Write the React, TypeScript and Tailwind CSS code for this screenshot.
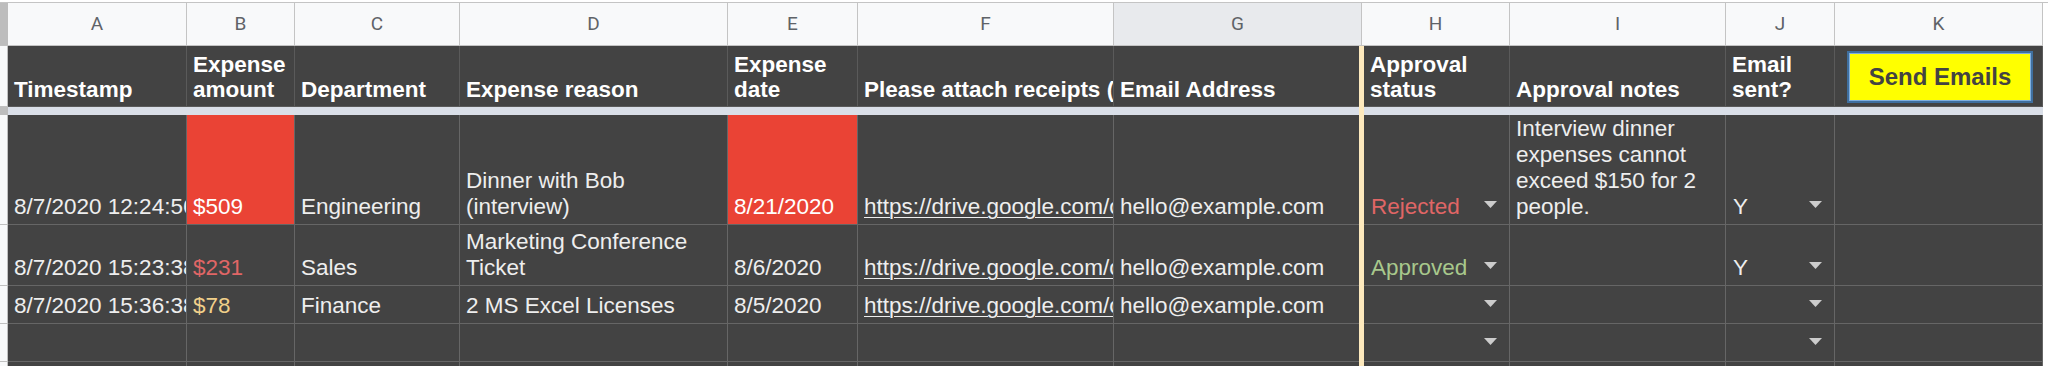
import React from "react";

const SANS = "font-['Liberation_Sans',Arial,sans-serif]";
const LETTER_COLS =
  "grid grid-cols-[8px_179px_108px_165px_268px_130px_256px_248px_148px_216px_109px_208px_5px]";
const COLS =
  "grid grid-cols-[8px_179px_108px_165px_268px_130px_256px_245px_5px_146px_216px_109px_208px_5px]";

function Arrow() {
  return (
    <svg width="13" height="7" viewBox="0 0 13 7" className="shrink-0 mb-[12px]">
      <polygon points="0,0 13,0 6.5,7" fill="#cccccc" />
    </svg>
  );
}

const dataCell =
  "flex items-end pl-[6px] pb-[4px] text-[22.5px] leading-[26px] text-[#eeeeee] whitespace-nowrap overflow-hidden border-b border-[#666666]";
const hdrCell =
  "flex items-end pl-[6px] pb-[4px] text-[22.5px] leading-[25px] font-bold text-white whitespace-nowrap overflow-hidden bg-[#434343] border-b border-[#5a5a5a]";

function RowHead() {
  return <div className="bg-[#f8f9fa] border-r border-b border-[#c0c0c0]" />;
}

function Cream() {
  return <div className="bg-[#fde9bd]" />;
}

type RowProps = {
  h: string;
  a?: React.ReactNode;
  b?: React.ReactNode;
  bRed?: boolean;
  c?: React.ReactNode;
  d?: React.ReactNode;
  e?: React.ReactNode;
  eRed?: boolean;
  f?: React.ReactNode;
  g?: React.ReactNode;
  hStatus?: React.ReactNode;
  i?: React.ReactNode;
  j?: React.ReactNode;
};

function DataRow(p: RowProps) {
  return (
    <div className={`${COLS} ${p.h}`}>
      <RowHead />
      <div className={`${dataCell} bg-[#434343] border-r`}>{p.a}</div>
      <div className={`${dataCell} border-r ${p.bRed ? "bg-[#ea4335] text-white" : "bg-[#434343]"}`}>{p.b}</div>
      <div className={`${dataCell} bg-[#434343] border-r`}>{p.c}</div>
      <div className={`${dataCell} bg-[#434343] border-r`}>{p.d}</div>
      <div className={`${dataCell} border-r ${p.eRed ? "bg-[#ea4335] text-white" : "bg-[#434343]"}`}>{p.e}</div>
      <div className={`${dataCell} bg-[#434343] border-r`}>{p.f}</div>
      <div className={`${dataCell} bg-[#434343]`}>{p.g}</div>
      <Cream />
      <div className={`${dataCell} bg-[#434343] border-r justify-between pr-[12px] pl-[7px]`}>
        <span>{p.hStatus}</span>
        <Arrow />
      </div>
      <div className={`${dataCell} bg-[#434343] border-r`}>{p.i}</div>
      <div className={`${dataCell} bg-[#434343] border-r justify-between pr-[12px] pl-[7px]`}>
        <span>{p.j}</span>
        <Arrow />
      </div>
      <div className={`${dataCell} bg-[#434343] border-r`} />
      <div className="bg-white" />
    </div>
  );
}

const link = <span className="underline underline-offset-[3px] decoration-1">https://drive.google.com/open?id=1a2b3c</span>;

export default function App() {
  const letters = ["A", "B", "C", "D", "E", "F", "G", "H", "I", "J", "K"];
  return (
    <div className={`${SANS} w-[2048px] h-[366px] overflow-hidden bg-white pt-[2px]`}>
      {/* column letters */}
      <div className={`${LETTER_COLS} h-[44px] border-t border-[#c4c4c4]`}>
        <div className="bg-[#bdbdbd] border-b border-[#c0c0c0]" />
        {letters.map((l) => (
          <div
            key={l}
            className={`flex items-center justify-center border-r border-b border-[#c4c4c4] font-['Roboto',Arial,sans-serif] text-[19px] text-[#5f6368] ${
              l === "G" ? "bg-[#e8eaed]" : "bg-[#f8f9fa]"
            }`}
          >
            {l}
          </div>
        ))}
        <div className="bg-white" />
      </div>

      {/* header row */}
      <div className={`${COLS} h-[61px]`}>
        <RowHead />
        <div className={`${hdrCell} border-r`}>Timestamp</div>
        <div className={`${hdrCell} border-r`}>
          <span>Expense<br />amount</span>
        </div>
        <div className={`${hdrCell} border-r`}>Department</div>
        <div className={`${hdrCell} border-r`}>Expense reason</div>
        <div className={`${hdrCell} border-r`}>
          <span>Expense<br />date</span>
        </div>
        <div className={`${hdrCell} border-r`}>Please attach receipts (if any)</div>
        <div className={`${hdrCell}`}>Email Address</div>
        <Cream />
        <div className={`${hdrCell} border-r`}>
          <span>Approval<br />status</span>
        </div>
        <div className={`${hdrCell} border-r`}>Approval notes</div>
        <div className={`${hdrCell} border-r`}>
          <span>Email<br />sent?</span>
        </div>
        <div className="bg-[#434343] border-r border-b border-[#5a5a5a] flex items-start pt-[5px] pl-[12px]">
          <div className="w-[186px] h-[52px] bg-[#ffff00] border-2 border-[#3f6f9f] shadow-[inset_0_0_0_1px_#7eaee0] flex items-center justify-center">
            <span className="text-[24px] font-bold text-[#434343] leading-none">Send Emails</span>
          </div>
        </div>
        <div className="bg-white" />
      </div>

      {/* frozen row divider */}
      <div className={`${COLS} h-[8px]`}>
        <div className="bg-[#bdbdbd]" />
        <div className="col-span-7 bg-[#dadfe8]" />
        <Cream />
        <div className="col-span-4 bg-[#dadfe8]" />
        <div className="bg-white" />
      </div>

      <DataRow
        h="h-[110px]"
        a="8/7/2020 12:24:56"
        b="$509"
        bRed
        c="Engineering"
        d={<span>Dinner with Bob<br />(interview)</span>}
        e="8/21/2020"
        eRed
        f={link}
        g="hello@example.com"
        hStatus={<span className="text-[#e06666]">Rejected</span>}
        i={
          <span>
            Interview dinner<br />expenses cannot<br />exceed $150 for 2<br />people.
          </span>
        }
        j="Y"
      />
      <DataRow
        h="h-[61px]"
        a="8/7/2020 15:23:38"
        b={<span className="text-[#e06666]">$231</span>}
        c="Sales"
        d={<span>Marketing Conference<br />Ticket</span>}
        e="8/6/2020"
        f={link}
        g="hello@example.com"
        hStatus={<span className="text-[#a8c88c]">Approved</span>}
        j="Y"
      />
      <DataRow
        h="h-[38px]"
        a="8/7/2020 15:36:38"
        b={<span className="text-[#f1d08a]">$78</span>}
        c="Finance"
        d="2 MS Excel Licenses"
        e="8/5/2020"
        f={link}
        g="hello@example.com"
      />
      <DataRow h="h-[38px]" />
      <DataRow h="h-[38px]" />
    </div>
  );
}
